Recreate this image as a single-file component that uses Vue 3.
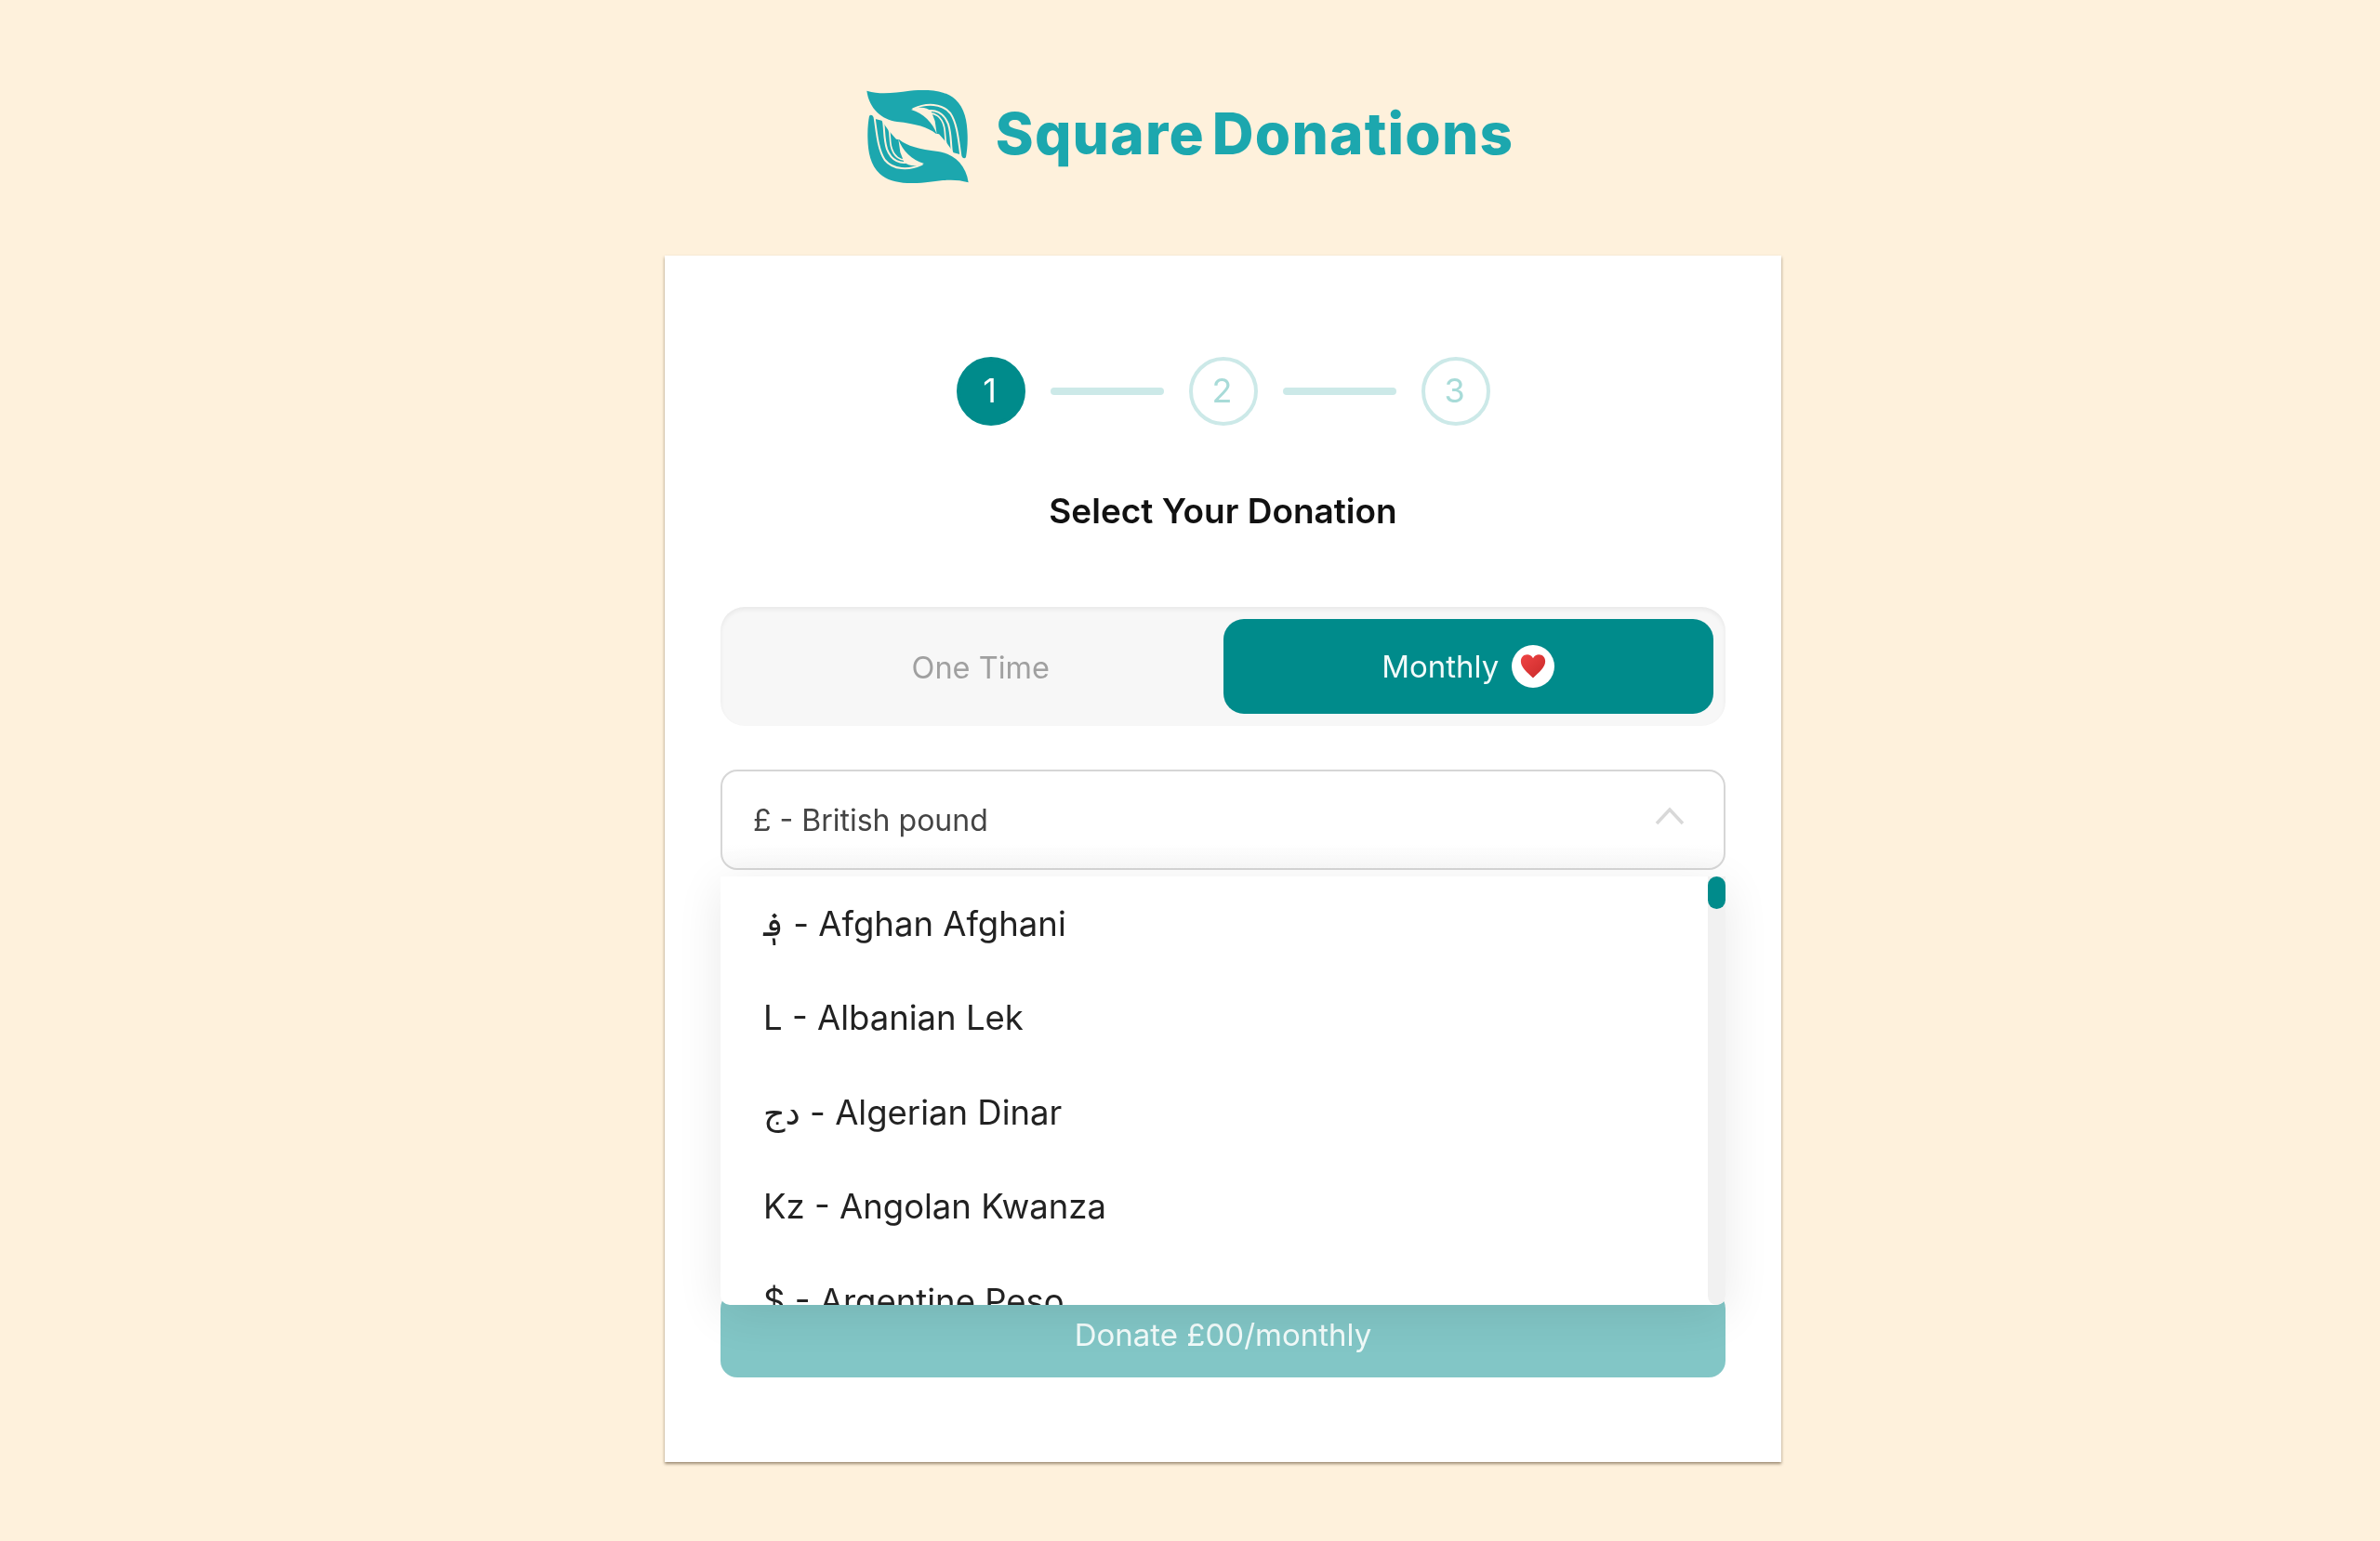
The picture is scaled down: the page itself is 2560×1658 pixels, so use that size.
<template>
  <div class="page">
    <header class="brand">
      <svg class="brand-mark" viewBox="42 50 328 300" aria-hidden="true">
        <g v-for="turn in [0, 180]" :key="turn" :transform="`rotate(${turn} 206 200)`">
          <path class="hand" d="M42 52C90 66 130 58 180 52C240 46 295 50 328 80C358 108 366 150 367 195C368 225 365 250 362 266C358 273 350 270 345 258L322 252L300 220L275 192L265 190C240 170 200 158 140 152C90 145 50 110 42 52Z" />
          <path class="wedge" d="M185 113C210 102 235 104 250 118L262 150L268 192C255 155 225 125 185 113Z" />
          <path class="gap" d="M190 111C235 90 285 92 312 125C335 160 338 215 346 268" />
          <path class="gap" d="M222 122C262 105 292 125 305 160C316 195 312 225 318 258" />
          <path class="gap thin" d="M232 127C262 118 285 138 292 170C296 190 294 205 298 222" />
        </g>
      </svg>
      <div class="brand-name"><span>Square</span><span>Donations</span></div>
    </header>

    <main class="card">
      <div class="steps">
        <template v-for="n in 3" :key="n">
          <div class="step" :class="{ active: n === 1 }">{{ n }}</div>
          <div v-if="n < 3" class="step-line"></div>
        </template>
      </div>

      <h1 class="title">Select Your Donation</h1>

      <div class="toggle">
        <button class="toggle-btn">One Time</button>
        <button class="toggle-btn selected">
          Monthly
          <span class="heart">
            <svg viewBox="0 0 24 24" width="30" height="30" aria-hidden="true">
              <defs>
                <linearGradient id="heart-fill" x1="0" y1="0" x2="1" y2="1">
                  <stop offset="0" stop-color="#ef4444" />
                  <stop offset="1" stop-color="#c92a2a" />
                </linearGradient>
              </defs>
              <path fill="url(#heart-fill)" d="M12 22C7 17 1.500 13 1.500 7.500C1.500 4 4 1.800 7 1.800C9 1.800 11 2.900 12 5C13 2.900 15 1.800 17 1.800C20 1.800 22.500 4 22.500 7.500C22.500 13 17 17 12 22Z" />
            </svg>
          </span>
        </button>
      </div>

      <div class="select-wrap">
        <div class="select">
          <span>£ - British pound</span>
          <svg class="chevron" viewBox="0 0 32 20" width="32" height="20" aria-hidden="true">
            <path d="M2 18L16 3L30 18" />
          </svg>
        </div>

        <div class="dropdown">
          <ul class="options">
            <li v-for="c in currencies" :key="c">{{ c }}</li>
          </ul>
          <div class="track"><div class="thumb"></div></div>
        </div>
      </div>

      <button class="donate">Donate £00/monthly</button>
    </main>
  </div>
</template>

<script setup>
const currencies = [
  '؋ - Afghan Afghani',
  'L - Albanian Lek',
  'دج - Algerian Dinar',
  'Kz - Angolan Kwanza',
  '$ - Argentine Peso'
]
</script>

<style>
html,
body {
  background: #fef1dc;
}
</style>

<style scoped>
.page {
  min-height: 1658px;
  box-sizing: border-box;
  padding-top: 97px;
  display: flex;
  flex-direction: column;
  align-items: center;
  background: #fef1dc;
  font-family: Inter, "DejaVu Sans", sans-serif;
  filter: blur(0.5px);
}

.brand {
  height: 100px;
  display: flex;
  align-items: center;
  gap: 29px;
  margin-bottom: 78px;
}

.brand-mark {
  width: 110px;
  height: 100px;
}

.hand {
  fill: #1ca7ae;
}

.wedge {
  fill: #fef1dc;
}

.gap {
  fill: none;
  stroke: #fef1dc;
  stroke-width: 6;
}

.gap.thin {
  stroke-width: 5;
}

.brand-name {
  display: flex;
  gap: 8px;
  color: #1ca7ae;
  font-size: 62px;
  font-weight: 800;
  letter-spacing: 1.2px;
  line-height: 1;
  padding-bottom: 6px;
}

.card {
  width: 1201px;
  height: 1298px;
  box-sizing: border-box;
  margin-left: 71px;
  padding: 109px 60px 0;
  background: #fff;
  box-shadow: 0 2px 3px rgba(60, 40, 10, 0.5);
  display: flex;
  flex-direction: column;
}

.steps {
  display: flex;
  justify-content: center;
  align-items: center;
  gap: 27px;
}

.step {
  width: 74px;
  height: 74px;
  box-sizing: border-box;
  border: 4px solid #cce9e8;
  border-radius: 50%;
  padding: 0 2px 2px 0;
  display: flex;
  align-items: center;
  justify-content: center;
  color: #a8dbd8;
  font-size: 36px;
}

.step.active {
  background: #008b8b;
  border-color: #008b8b;
  color: #fff;
}

.step-line {
  width: 122px;
  height: 8px;
  border-radius: 4px;
  background: #cce9e8;
}

.title {
  margin: 68px 0 79px;
  height: 48px;
  text-align: center;
  color: #111;
  font-size: 37px;
  line-height: 48px;
  font-weight: 600;
}

.toggle {
  height: 128px;
  box-sizing: border-box;
  padding: 13px;
  border-radius: 26px;
  background: #f7f7f7;
  box-shadow: inset 0 3px 5px rgba(0, 0, 0, 0.06);
  display: grid;
  grid-template-columns: 1fr 1fr;
}

.toggle-btn {
  border: 0;
  background: none;
  border-radius: 22px;
  padding: 2px 0 0 6px;
  font-family: inherit;
  font-size: 32.500px;
  color: #a0a0a0;
  display: flex;
  align-items: center;
  justify-content: center;
  gap: 14px;
}

.toggle-btn.selected {
  background: #008b8b;
  padding: 0;
  color: #f2fbfa;
  font-size: 33px;
}

.heart {
  width: 46px;
  height: 46px;
  border-radius: 50%;
  background: #fff;
  display: flex;
  align-items: center;
  justify-content: center;
}

.select-wrap {
  position: relative;
  z-index: 2;
  margin: 47px 0 454px;
}

.select {
  height: 108px;
  box-sizing: border-box;
  padding: 0 34px 0 33px;
  border: 2px solid #d6d6d6;
  border-radius: 18px;
  background: linear-gradient(#fff 75%, #f9f9f9);
  display: flex;
  align-items: center;
  justify-content: space-between;
  color: #444;
  font-size: 32px;
}

.chevron {
  margin: -8px 8px 0 0;
  fill: none;
  stroke: #d8d8d8;
  stroke-width: 3.500;
}

.dropdown {
  position: absolute;
  top: 115px;
  left: 0;
  right: 0;
  height: 461px;
  display: flex;
  border-radius: 0 0 10px 10px;
  background: #fff;
  box-shadow: 0 10px 50px rgba(0, 0, 0, 0.09);
}

.options {
  flex: 1;
  margin: 0;
  padding: 0;
  list-style: none;
  overflow: hidden;
  color: #222;
  font-size: 36.500px;
}

.options li {
  height: 101.500px;
  padding-left: 46px;
  display: flex;
  align-items: center;
}

.track {
  width: 19px;
  border-radius: 0 0 10px 10px;
  background: #f1f1f1;
}

.thumb {
  height: 35px;
  border-radius: 10px;
  background: #008b8b;
}

.donate {
  height: 92px;
  flex: none;
  border: 0;
  border-radius: 18px;
  background: rgba(0, 139, 139, 0.49);
  color: #f2fbfa;
  font-family: inherit;
  font-size: 33px;
}
</style>
